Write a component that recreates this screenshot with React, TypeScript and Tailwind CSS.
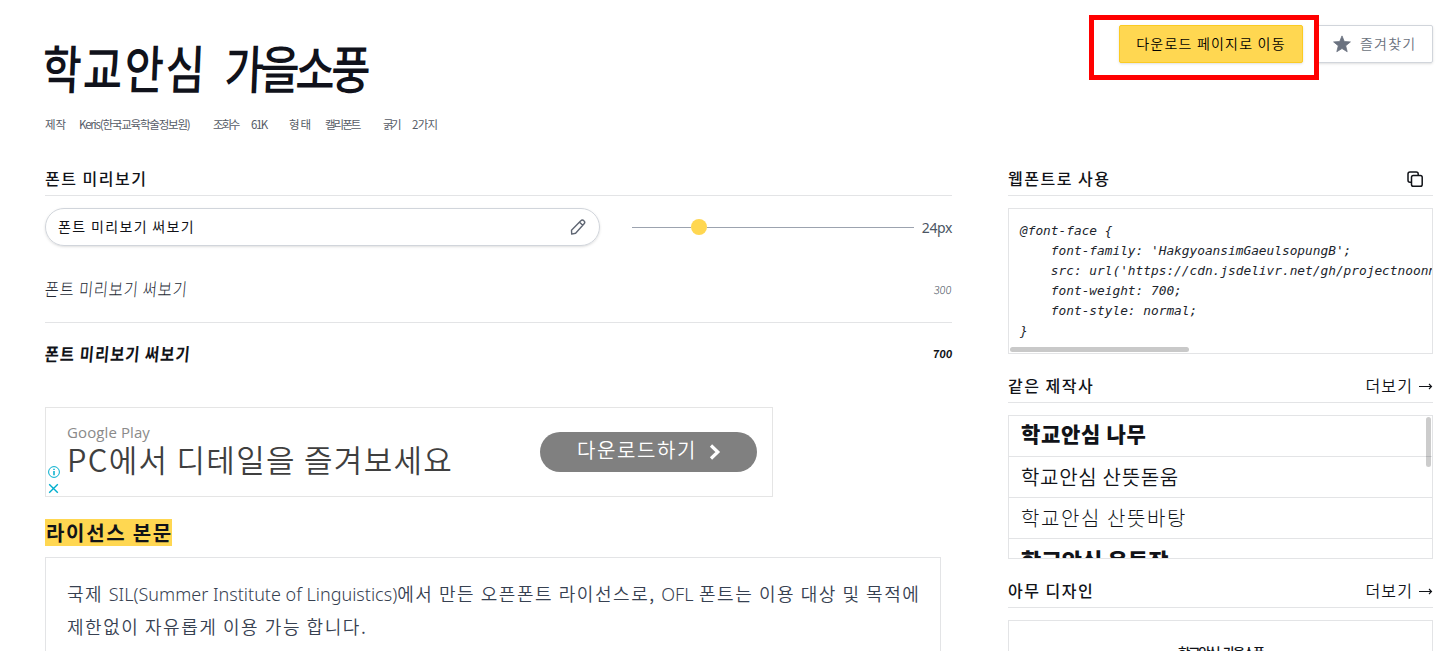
import React from 'react';

interface MetaItem {
  label: string;
  className: string;
}

const metaItems: MetaItem[] = [
  { label: '제작', className: 'w-[34px] tracking-[0px]' },
  { label: 'Keris(한국교육학술정보원)', className: 'w-[134px] tracking-[-1.2px]' },
  { label: '조회수', className: 'w-[38px] tracking-[-2.2px]' },
  { label: '61K', className: 'w-[38px] tracking-[-1.5px]' },
  { label: '형태', className: 'w-[36px] tracking-[1px]' },
  { label: '캘리폰트', className: 'w-[58px] tracking-[-2px]' },
  { label: '굵기', className: 'w-[29px] tracking-[-2.5px]' },
  { label: '2가지', className: 'w-[40px] tracking-[-0.7px]' },
];

const makerFonts = [
  { name: '학교안심 나무', className: 'text-[21px] font-black tracking-[0.7px] pb-[5px]' },
  { name: '학교안심 산뜻돋움', className: 'text-[20px] font-[350] tracking-[0.7px] pb-px' },
  { name: '학교안심 산뜻바탕', className: 'text-[20px] font-light tracking-[1.6px] pb-px' },
  { name: '학교안심 운동장', className: 'text-[22px] font-black tracking-[0.1px]' },
];

const fontFaceCode = `@font-face {
    font-family: 'HakgyoansimGaeulsopungB';
    src: url('https://cdn.jsdelivr.net/gh/projectnoonnu/2408-5@1.0/HakgyoansimGaeulsopungB.woff2') format('woff2');
    font-weight: 700;
    font-style: normal;
}`;

const SectionTitle: React.FC<{ title: string; className?: string; children?: React.ReactNode }> = ({ title, className = '', children }) => (
  <div className={`flex h-[33px] items-center justify-between border-b border-[#e3e4e6] ${className}`}>
    <h2 className="pb-[2px] text-[16px] leading-6 font-medium tracking-[1.5px] whitespace-nowrap">{title}</h2>
    {children}
  </div>
);

const MoreLink = () => (
  <a className="flex items-center gap-[6px] pb-[2px] text-[16px] leading-6 font-[350] tracking-[1.1px]">
    더보기
    <svg className="h-4 w-[14px]" viewBox="0 0 14 16" fill="none" stroke="currentColor" strokeWidth="1.1">
      <path d="M0 9.5h12.5M10 7l2.5 2.5L10 12" />
    </svg>
  </a>
);

const Header = () => (
  <header className="flex h-[163px] items-start justify-between">
    <div>
      <h1 className="-ml-[2px] flex h-[104px] origin-left scale-x-[0.82] -skew-x-3 items-center gap-[22px] pt-[29px] text-[52px] leading-none font-medium whitespace-nowrap text-[#10121b]">
        <span className="tracking-[2.3px]">학교안심</span>
        <span className="tracking-[-4.5px]">가을소풍</span>
      </h1>
      <div className="mt-[12px] flex text-[11.5px] leading-4 text-[#555b66]">
        {metaItems.map((item) => (
          <span key={item.label} className={`shrink-0 whitespace-nowrap ${item.className}`}>{item.label}</span>
        ))}
      </div>
    </div>

    <div className="relative flex gap-3 pt-[25px]">
      <button className="h-[38px] w-[184px] rounded-[2px] border border-[#fbcb23] bg-[#ffd751] pb-[2px] text-[14px] font-[350] tracking-[1.2px] whitespace-nowrap text-black shadow-sm">
        다운로드 페이지로 이동
      </button>
      <button className="flex h-[38px] w-[118px] items-center rounded-[2px] border border-[#d1d5db] pl-[17px] text-[14px] font-[350] tracking-[1.2px] text-[#6b7280] shadow-sm">
        <svg className="mr-[9px] h-[18px] w-[18px]" viewBox="0 0 18 18" fill="currentColor" stroke="currentColor" strokeWidth="0.8" strokeLinejoin="round">
          <path d="M9 .9l2.3 5.6 6.1.4-4.7 3.9 1.5 5.9L9 13.5l-5.2 3.2 1.5-5.9L.6 6.9l6.1-.4z" />
        </svg>
        <span className="pb-px">즐겨찾기</span>
      </button>
      {/* Highlight frame over the download button */}
      <div className="pointer-events-none absolute top-[15px] -left-[30px] h-[65px] w-[230px] border-[5px] border-[#ff0000]"></div>
    </div>
  </header>
);

const PreviewPanel = () => (
  <section>
    <SectionTitle title="폰트 미리보기" />

    <div className="mt-3 flex h-[38px] items-center">
      <div className="flex h-[38px] w-[555px] items-center justify-between rounded-full border border-[#d1d5db] pr-[11px] pl-3 text-[14px] tracking-[1.35px] shadow-sm">
        <span className="pb-px">폰트 미리보기 써보기</span>
        <svg className="h-5 w-5 text-[#5f6673]" viewBox="0 0 20 20" fill="none" stroke="currentColor" strokeWidth="1.4" strokeLinejoin="round" strokeLinecap="round">
          <path d="M12.8 3.8a2.2 2.2 0 013.1-.1 2.2 2.2 0 01.2 3.1L7.6 16.2l-3.9.9-.2-3.9zM11.6 5.2l3.1 3.1" />
        </svg>
      </div>
      <div className="ml-8 flex w-[282px] shrink-0 items-center">
        <div className="h-px w-[59px] bg-[#9ca3af]"></div>
        <div className="h-4 w-4 rounded-full bg-[#ffd751]"></div>
        <div className="h-px flex-1 bg-[#9ca3af]"></div>
      </div>
      <span className="ml-2 pt-px font-['Noto_Sans'] text-[14px] tracking-[-0.4px] text-[#4b5563]">24px</span>
    </div>

    <div className="flex h-[77px] items-center justify-between border-b border-[#e3e4e6] pt-[8px]">
      <span className="origin-left scale-x-[0.85] -skew-x-6 text-[18px] font-light tracking-[1px] whitespace-nowrap text-[#252a35]">폰트 미리보기 써보기</span>
      <span className="-skew-x-6 pt-[2px] text-[11px] font-light text-[#4b5563]">300</span>
    </div>
    <div className="flex h-[64px] items-center justify-between pb-1">
      <span className="origin-left scale-x-[0.85] -skew-x-6 text-[18px] font-bold tracking-[1.3px] whitespace-nowrap">폰트 미리보기 써보기</span>
      <span className="-skew-x-6 pt-px text-[11px] font-bold">700</span>
    </div>
  </section>
);

const AdBanner = () => (
  <div className="mt-5 flex h-[90px] w-[728px] items-center border border-[#e5e5e5]">
    <div className="flex h-full w-[15px] flex-col items-center justify-end gap-[5px] pb-[2px] text-[#00aecd]">
      <svg className="h-3 w-3" viewBox="0 0 12 12" fill="none" stroke="currentColor">
        <circle cx="6" cy="6" r="5.4" />
        <path d="M6 5v4.2M6 2.7v1.3" strokeWidth="1.5" />
      </svg>
      <svg className="h-[11px] w-[11px]" viewBox="0 0 11 11" fill="none" stroke="currentColor" strokeWidth="1.4">
        <path d="M1.2 1.2l8.6 8.6M9.8 1.2L1.2 9.8" />
      </svg>
    </div>
    <div className="ml-[6px] w-[473px] pb-[5px] whitespace-nowrap">
      <p className="font-['Open_Sans'] text-[15px] leading-[18px] tracking-[0.1px] text-[#8a8a8a]">Google Play</p>
      <p className="text-[31px] leading-[36px] font-[350] tracking-[1.3px] text-[#3f3f3f]">PC에서 디테일을 즐겨보세요</p>
    </div>
    <div className="flex h-10 w-[217px] items-center rounded-full bg-[#808080] pl-[37px] text-white">
      <span className="pb-1 text-[20px] leading-6 font-[350] tracking-[1.6px]">다운로드하기</span>
      <svg className="ml-[12px] h-4 w-3" viewBox="0 0 12 16" fill="none" stroke="currentColor" strokeWidth="3.2">
        <path d="M2 1.5L8.8 8 2 14.5" />
      </svg>
    </div>
  </div>
);

const License = () => (
  <section className="mt-[22px]">
    <h2 className="flex h-[27px] w-[127px] items-center bg-[#ffd751] pl-px text-[20px] leading-none font-bold tracking-[1.7px] whitespace-nowrap">라이선스 본문</h2>
    <div className="mt-[11px] h-[200px] w-[896px] border border-[#e3e4e6] px-[21px] pt-[19px] text-[18px] leading-8 font-[350] tracking-[1.55px] whitespace-nowrap text-[#374151]">
      <p>
        국제 <span className="font-['Noto_Sans'] font-light tracking-[0px]">SIL(Summer Institute of Linguistics)</span>에서 만든 오픈폰트 라이선스로, <span className="font-['Noto_Sans'] font-light tracking-[0px]">OFL</span> 폰트는 이용 대상 및 목적에
      </p>
      <p>제한없이 자유롭게 이용 가능 합니다.</p>
    </div>
  </section>
);

const Sidebar = () => (
  <aside className="w-[425px] shrink-0">
    <SectionTitle title="웹폰트로 사용">
      <svg className="mr-[9px] h-[18px] w-[18px]" viewBox="0 0 18 18" fill="none" stroke="currentColor" strokeWidth="1.5" strokeLinejoin="round">
        <rect x="5.5" y="5.5" width="10.7" height="10.7" rx="1.8" />
        <path d="M5.5 12.2H4A2 2 0 012 10.2V4a2 2 0 012-2h6.2a2 2 0 012 2v1.5" />
      </svg>
    </SectionTitle>
    <div className="mt-3 h-[146px] overflow-hidden border border-[#e3e4e6] pt-[12px]">
      <pre className="h-[126px] overflow-hidden pl-[11px] font-['DejaVu_Sans_Mono'] text-[12.8px] leading-5 text-[#20242c] italic">{fontFaceCode}</pre>
      <div className="ml-px h-[5px] w-[179px] rounded-full bg-[#c9c9c9]"></div>
    </div>

    <SectionTitle title="같은 제작사" className="mt-4">
      <MoreLink />
    </SectionTitle>
    <div className="relative mt-3 h-[144px] overflow-hidden border border-[#e3e4e6]">
      {makerFonts.map((font) => (
        <div key={font.name} className="h-[41px] border-b border-[#e3e4e6] pl-3">
          <div className={`flex h-10 items-center whitespace-nowrap ${font.className}`}>{font.name}</div>
        </div>
      ))}
      <div className="absolute top-px right-px h-[50px] w-[5px] rounded-full bg-black/20"></div>
    </div>

    <SectionTitle title="아무 디자인" className="mt-4">
      <MoreLink />
    </SectionTitle>
    <div className="mt-3 h-[120px] border border-[#e3e4e6] pt-[18px] text-center">
      <span className="text-[13.5px] leading-5 font-medium tracking-[-2.4px] [word-spacing:4px]">학교안심 가을소풍</span>
    </div>
  </aside>
);

const App: React.FC = () => {
  return (
    <div className="h-[651px] w-[1454px] overflow-hidden bg-white pr-[21px] pl-[45px] font-['Noto_Sans_CJK_KR',sans-serif] text-[#111318]">
      <Header />
      <main className="flex justify-between">
        <div className="w-[907px]">
          <PreviewPanel />
          <AdBanner />
          <License />
        </div>
        <Sidebar />
      </main>
    </div>
  );
};

export default App;
